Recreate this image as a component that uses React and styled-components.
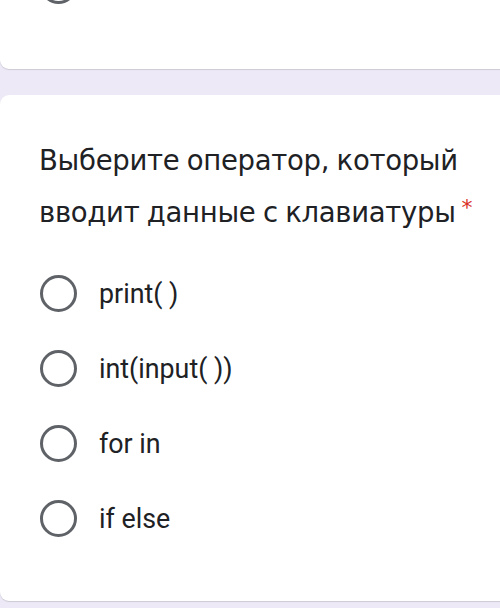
import React from 'react';
import styled, { createGlobalStyle } from 'styled-components';

const GlobalStyle = createGlobalStyle`
  html, body {
    margin: 0;
    padding: 0;
    background-color: #ede9f6;
    overflow: hidden;
  }
`;

const Page = styled.div`
  height: 608px;
  overflow: hidden;
  display: flex;
  flex-direction: column;
  gap: 26px;
`;

const Card = styled.section`
  background-color: #fff;
  border-radius: 9px;
  margin-right: -20px;
  padding: ${(p) => (p.$top ? '0 0 46px 40px' : '41px 0 45px 39px')};
  margin-top: ${(p) => (p.$top ? '-52px' : '0')};
  box-shadow: 0 1px 1px rgba(60, 64, 67, 0.18);
`;

const Title = styled.h2`
  margin: 0 0 20px;
  font-family: 'DejaVu Sans', 'Open Sans', sans-serif;
  font-weight: 400;
  font-size: 27.5px;
  line-height: 48px;
  letter-spacing: -0.3px;
  word-spacing: -1px;
  color: #202124;
`;

const Required = styled.span`
  color: #d93025;
  font-size: 22px;
  vertical-align: 7px;
  margin-left: 6px;
`;

const Options = styled.div`
  display: flex;
  flex-direction: column;
  margin-left: 1px;
`;

const Row = styled.label`
  display: flex;
  align-items: center;
  gap: 22px;
  height: 75px;
  font-family: Roboto, 'Noto Sans', sans-serif;
  font-size: 26.8px;
  color: #202124;
`;

const Radio = styled.span`
  box-sizing: border-box;
  width: 37px;
  height: 37px;
  border-radius: 50%;
  border: 3.5px solid #5f6368;
  flex-shrink: 0;
`;

const options = ['print( )', 'int(input( ))', 'for in', 'if else'];

export default function App() {
  return (
    <>
      <GlobalStyle />
      <Page>
        <Card $top>
          <Row>
            <Radio />
          </Row>
        </Card>
        <Card>
          <Title>
            Выберите оператор, который
            <br />
            вводит данные с клавиатуры<Required>*</Required>
          </Title>
          <Options>
            {options.map((o) => (
              <Row key={o}>
                <Radio />
                <span>{o}</span>
              </Row>
            ))}
          </Options>
        </Card>
      </Page>
    </>
  );
}
